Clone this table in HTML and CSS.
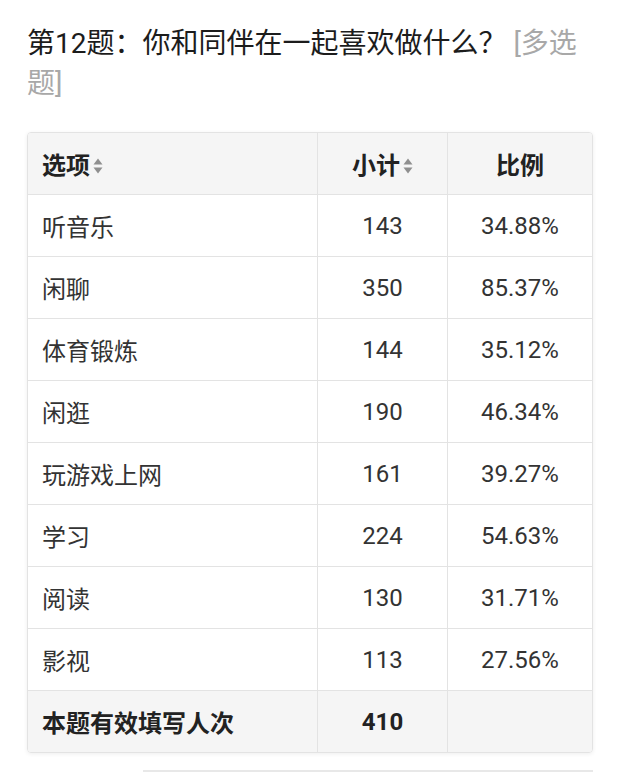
FILE: index.html
```html
<!DOCTYPE html>
<html lang="zh">
<head>
<meta charset="utf-8">
<link rel="stylesheet" href="styles.css">
</head>
<body>
<div class="page">
  <h2 class="title"><span class="q">第12题：你和同伴在一起喜欢做什么？</span> <span class="tag">[多选题]</span></h2>
  <table class="stats">
    <thead>
      <tr>
        <th class="c-opt">选项<span class="sort"><svg width="10" height="18" viewBox="0 0 10 18"><path d="M5 1.5 L9.5 7.5 H0.5 Z" fill="#8f8f8f"/><path d="M5 16.5 L9.5 10.5 H0.5 Z" fill="#8f8f8f"/></svg></span></th>
        <th class="c-num">小计<span class="sort"><svg width="10" height="18" viewBox="0 0 10 18"><path d="M5 1.5 L9.5 7.5 H0.5 Z" fill="#8f8f8f"/><path d="M5 16.5 L9.5 10.5 H0.5 Z" fill="#8f8f8f"/></svg></span></th>
        <th class="c-pct">比例</th>
      </tr>
    </thead>
    <tbody>
      <tr><td class="c-opt">听音乐</td><td class="c-num">143</td><td class="c-pct">34.88%</td></tr>
      <tr><td class="c-opt">闲聊</td><td class="c-num">350</td><td class="c-pct">85.37%</td></tr>
      <tr><td class="c-opt">体育锻炼</td><td class="c-num">144</td><td class="c-pct">35.12%</td></tr>
      <tr><td class="c-opt">闲逛</td><td class="c-num">190</td><td class="c-pct">46.34%</td></tr>
      <tr><td class="c-opt">玩游戏上网</td><td class="c-num">161</td><td class="c-pct">39.27%</td></tr>
      <tr><td class="c-opt">学习</td><td class="c-num">224</td><td class="c-pct">54.63%</td></tr>
      <tr><td class="c-opt">阅读</td><td class="c-num">130</td><td class="c-pct">31.71%</td></tr>
      <tr><td class="c-opt">影视</td><td class="c-num">113</td><td class="c-pct">27.56%</td></tr>
    </tbody>
    <tfoot>
      <tr><td class="c-opt">本题有效填写人次</td><td class="c-num">410</td><td class="c-pct"></td></tr>
    </tfoot>
  </table>
  <div class="next-box"></div>
</div>
</body>
</html>
```

FILE: styles.css
```css
html, body {
  margin: 0;
  padding: 0;
  background: #ffffff;
}
body {
  font-family: Roboto, "Noto Sans CJK SC", sans-serif;
  color: #333333;
}
.page {
  padding: 24px 27px 0 27px;
}
.title {
  margin: 0;
  font-size: 28px;
  line-height: 40px;
  font-weight: 400;
  color: #1c1c1c;
}
.tag {
  color: #a8a8a8;
}
.stats {
  margin-top: 28px;
  width: 566px;
  border-collapse: separate;
  border-spacing: 0;
  border: 1px solid #e3e3e3;
  border-radius: 4px;
  box-shadow: 0 1px 4px rgba(0, 0, 0, 0.07);
  overflow: hidden;
  font-size: 24px;
}
.stats th, .stats td {
  height: 62px;
  padding: 0;
  border-bottom: 1px solid #e3e3e3;
  border-right: 1px solid #e3e3e3;
  vertical-align: middle;
  box-sizing: border-box;
}
.stats th:last-child, .stats td:last-child {
  border-right: none;
}
.stats tfoot td {
  border-bottom: none;
  height: 61px;
}
.stats thead th, .stats tfoot td {
  background: #f5f5f5;
  font-weight: 700;
  color: #222222;
}
.c-opt {
  width: 290px;
  text-align: left;
  padding-left: 14px !important;
}
.c-num {
  width: 130px;
  text-align: center;
}
.c-pct {
  text-align: center;
}
.sort {
  display: inline-block;
  margin-left: 3px;
  vertical-align: -1px;
}
.sort svg {
  display: block;
}
.next-box {
  margin: 17px 0 0 116px;
  height: 20px;
  border-top: 2px solid #e8e8e8;
}
```
